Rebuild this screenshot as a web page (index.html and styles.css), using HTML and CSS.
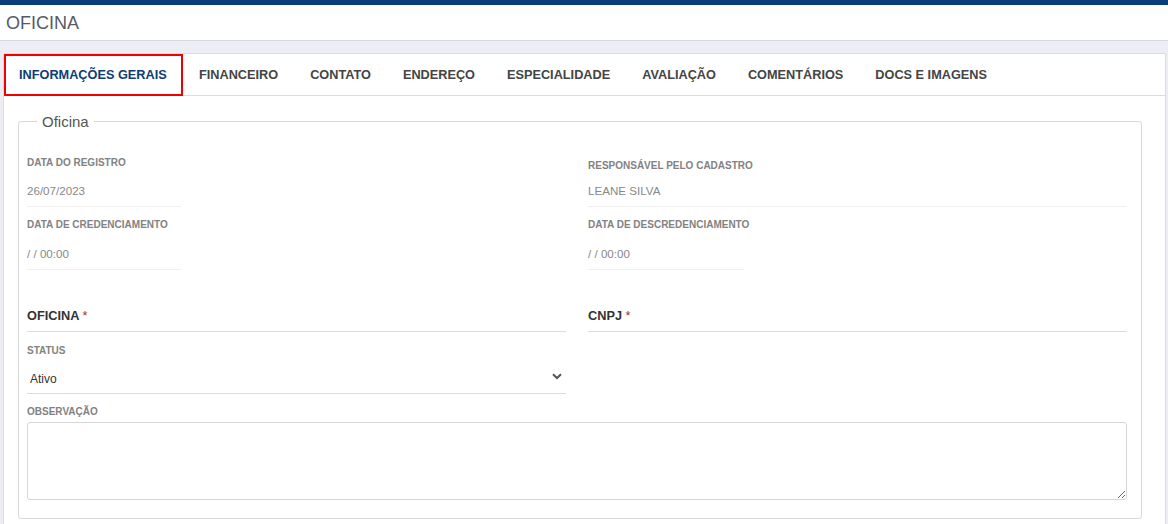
FILE: index.html
```html
<!DOCTYPE html>
<html lang="pt-BR">
<head>
<meta charset="utf-8">
<title>Oficina</title>
<link rel="stylesheet" href="styles.css">
</head>
<body>
<div class="topbar"></div>
<header class="page-header"><h1>OFICINA</h1></header>
<main class="page-body">
  <section class="card">
    <nav class="tabs">
      <a class="tab active">INFORMAÇÕES GERAIS</a>
      <a class="tab">FINANCEIRO</a>
      <a class="tab">CONTATO</a>
      <a class="tab">ENDEREÇO</a>
      <a class="tab">ESPECIALIDADE</a>
      <a class="tab">AVALIAÇÃO</a>
      <a class="tab">COMENTÁRIOS</a>
      <a class="tab">DOCS E IMAGENS</a>
    </nav>
    <div class="card-body">
      <fieldset class="group">
        <legend>Oficina</legend>
        <div class="grid">
          <div class="field row1">
            <div class="label">DATA DO REGISTRO</div>
            <div class="value short">26/07/2023</div>
          </div>
          <div class="field row1 shifted">
            <div class="label">RESPONSÁVEL PELO CADASTRO</div>
            <div class="value">LEANE SILVA</div>
          </div>
          <div class="field row2">
            <div class="label">DATA DE CREDENCIAMENTO</div>
            <div class="value short">/ / 00:00</div>
          </div>
          <div class="field row2">
            <div class="label">DATA DE DESCREDENCIAMENTO</div>
            <div class="value mid">/ / 00:00</div>
          </div>
          <div class="field big">
            <div class="big-label">OFICINA <span class="req">*</span></div>
          </div>
          <div class="field big">
            <div class="big-label">CNPJ <span class="req">*</span></div>
          </div>
          <div class="field">
            <div class="label">STATUS</div>
            <div class="select">
              <span>Ativo</span>
              <svg class="chev" width="10" height="7" viewBox="0 0 10 7"><path d="M1 1.2 L5 5 L9 1.2" fill="none" stroke="#555" stroke-width="2"/></svg>
            </div>
          </div>
          <div class="field"></div>
          <div class="field full">
            <div class="label">OBSERVAÇÃO</div>
            <textarea class="obs"></textarea>
          </div>
        </div>
      </fieldset>
    </div>
  </section>
</main>
</body>
</html>
```

FILE: styles.css
```css
* { box-sizing: border-box; }
html, body { margin: 0; padding: 0; }
body {
  font-family: "Liberation Sans", Arial, sans-serif;
  background: #ededf5;
  width: 1168px;
  height: 524px;
  overflow: hidden;
}
.topbar { height: 5px; background: #0b3f7b; }
.page-header {
  background: #fff;
  height: 36px;
  border-bottom: 1px solid #d9d9df;
  padding: 8px 0 0 6px;
}
.page-header h1 {
  margin: 0;
  font-size: 18px;
  font-weight: normal;
  color: #555b66;
  line-height: 20px;
}
.page-body { padding: 12px 2px 0 3px; }
.card {
  background: #fff;
  border: 1px solid #dcdcdc;
  border-radius: 2px;
  height: 480px;
}
.tabs {
  display: flex;
  height: 42px;
  border-bottom: 1px solid #dcdcdc;
}
.tab {
  display: flex;
  align-items: center;
  padding: 0 16px 1px 16px;
  font-size: 12.72px;
  font-weight: bold;
  color: #444;
  white-space: nowrap;
}
.tab.active {
  color: #0d3d73;
  border: 2px solid #f00000;
  padding: 0 13px 1px 13px;
  width: 179px;
  height: 42px;
}
.card-body { padding: 17px 23px 0 14px; }
.group {
  margin: 0;
  border: 1px solid #d8d8d8;
  border-radius: 3px;
  padding: 26px 14px 18px 8px;
}
.group legend {
  font-size: 15px;
  color: #555;
  padding: 0 5px;
  margin-left: 10px;
}
.grid {
  display: grid;
  grid-template-columns: 539px 539px;
  column-gap: 22px;
}
.field { display: flex; flex-direction: column; }
.label {
  font-size: 10px;
  font-weight: bold;
  color: #828282;
  height: 14px;
  line-height: 14px;
}
.value {
  font-size: 11.6px;
  line-height: 14px;
  color: #888;
  border-bottom: 1px solid #f0f0f0;
}
.row1 .value { padding-top: 14px; height: 37px; margin-bottom: 11px; }
.row1.shifted .label { margin-top: 3px; }
.row1.shifted .value { padding-top: 11px; height: 34px; }
.row2 .value { padding-top: 15px; height: 38px; }
.value.short { width: 154px; }
.value.mid { width: 156px; }
.big { margin-top: 38px; }
.big-label {
  font-size: 12.75px;
  font-weight: bold;
  color: #333;
  height: 24px;
  line-height: 16px;
  border-bottom: 1px solid #dcdcdc;
  margin-bottom: 12px;
}
.req { color: #9a2d2d; font-weight: normal; }
.select {
  display: flex;
  justify-content: space-between;
  align-items: center;
  height: 36px;
  padding: 6px 4px 0 3px;
  border-bottom: 1px solid #dcdcdc;
  font-size: 12px;
  color: #333;
  margin-bottom: 11px;
}
.chev { margin-top: -5px; }
.full { grid-column: 1 / 3; }
.full .label { margin-bottom: 3px; }
.obs {
  display: block;
  width: 1100px;
  height: 78px;
  margin: 0;
  border: 1px solid #d6d6d6;
  border-radius: 3px;
  resize: vertical;
  font-family: inherit;
}
```
